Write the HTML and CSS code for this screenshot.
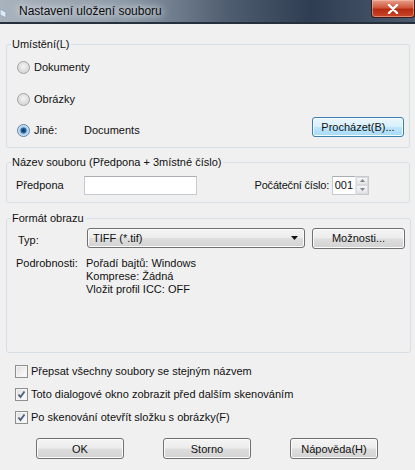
FILE: index.html
```html
<!DOCTYPE html>
<html lang="cs">
<head>
  <meta charset="UTF-8" />
  <title>Nastavení uložení souboru</title>
  <link rel="stylesheet" href="styles.css">
</head>
<body>
  <div class="window">
    <div class="titlebar">
      <svg class="app-icon" width="8" height="12" viewBox="0 0 8 12">
        <path d="M0 2 L6 5 L6 11 L0 8 Z" fill="#dfe8f2" stroke="#8ea4bc" stroke-width="1"/>
      </svg>
      <span class="title">Nastavení uložení souboru</span>
      <button class="close">
        <svg width="12" height="10" viewBox="0 0 12 10">
          <path d="M2 1 L10 9 M10 1 L2 9" stroke="#fff" stroke-width="2.4" stroke-linecap="round"/>
        </svg>
      </button>
    </div>

    <div class="client">
      <fieldset class="group group-location">
        <legend>Umístění(L)</legend>
        <div class="row row-docs">
          <span class="radio"></span><span>Dokumenty</span>
        </div>
        <div class="row row-pics">
          <span class="radio"></span><span>Obrázky</span>
        </div>
        <div class="row row-other">
          <div class="radio-label">
            <span class="radio checked"></span><span>Jiné:</span>
          </div>
          <span class="path">Documents</span>
          <button class="btn btn-hot btn-browse">Procházet(B)...</button>
        </div>
      </fieldset>

      <fieldset class="group group-name">
        <legend>Název souboru (Předpona + 3místné číslo)</legend>
        <div class="row row-name">
          <span class="field-label">Předpona</span>
          <span class="input input-prefix"></span>
          <span class="field-label start-label">Počáteční číslo:</span>
          <span class="input input-number">001</span>
          <span class="spinner">
            <span class="spin-up">
              <svg width="5" height="3" viewBox="0 0 5 3"><path d="M0 3 L2.5 0 L5 3 Z" fill="#7a8591"/></svg>
            </span>
            <span class="spin-down">
              <svg width="5" height="3" viewBox="0 0 5 3"><path d="M0 0 L2.5 3 L5 0 Z" fill="#7a8591"/></svg>
            </span>
          </span>
        </div>
      </fieldset>

      <fieldset class="group group-format">
        <legend>Formát obrazu</legend>
        <div class="row row-type">
          <span class="field-label type-label">Typ:</span>
          <div class="combo">
            <span>TIFF (*.tif)</span>
            <svg width="7" height="4" viewBox="0 0 7 4"><path d="M0 0 L7 0 L3.5 4 Z" fill="#111"/></svg>
          </div>
          <button class="btn btn-options">Možnosti...</button>
        </div>
        <div class="details">
          <span class="field-label">Podrobnosti:</span>
          <div class="detail-lines">
            <span>Pořadí bajtů: Windows</span>
            <span>Komprese: Žádná</span>
            <span>Vložit profil ICC: OFF</span>
          </div>
        </div>
      </fieldset>

      <div class="checks">
        <div class="check-row">
          <span class="check"></span><span>Přepsat všechny soubory se stejným názvem</span>
        </div>
        <div class="check-row">
          <span class="check checked">
            <svg width="9" height="9" viewBox="0 0 9 9"><path d="M1.5 4.5 L3.5 7 L7.5 1.5" fill="none" stroke="#4a5f78" stroke-width="1.8"/></svg>
          </span><span>Toto dialogové okno zobrazit před dalším skenováním</span>
        </div>
        <div class="check-row">
          <span class="check checked">
            <svg width="9" height="9" viewBox="0 0 9 9"><path d="M1.5 4.5 L3.5 7 L7.5 1.5" fill="none" stroke="#4a5f78" stroke-width="1.8"/></svg>
          </span><span>Po skenování otevřít složku s obrázky(F)</span>
        </div>
      </div>

      <div class="actions">
        <button class="btn btn-action">OK</button>
        <button class="btn btn-action">Storno</button>
        <button class="btn btn-action">Nápověda(H)</button>
      </div>
    </div>
  </div>
</body>
</html>
```

FILE: styles.css
```css
* {
  box-sizing: border-box;
}

body {
  margin: 0;
  padding: 0;
  background-color: #f0f0f0;
  font-family: "Liberation Sans", Arial, sans-serif;
  font-size: 11px;
  color: #111;
}

.window {
  width: 415px;
  height: 470px;
  background-color: #f0f0f0;
  display: flex;
  flex-direction: column;
}

/* title bar */
.titlebar {
  height: 24px;
  display: flex;
  align-items: flex-start;
  background: linear-gradient(90deg, #a9b3bd 0%, #8d99a6 30%, #4f5d70 55%, #2f3d52 75%, #4c5a6e 100%);
  border-bottom: 2px solid #26303c;
}

.app-icon {
  margin-top: 7px;
  flex-shrink: 0;
}

.title {
  margin-left: 11px;
  margin-top: 4px;
  font-size: 12px;
  color: #0c0c0c;
  text-shadow: 0 0 6px #e8ecf0, 0 0 10px #dde3ea;
}

.close {
  margin-left: auto;
  width: 44px;
  height: 18px;
  padding: 0;
  border: 1px solid #3a1a1a;
  border-top: none;
  border-radius: 0 0 4px 4px;
  background: linear-gradient(180deg, #e6a08c 0%, #d0563c 45%, #b52b12 55%, #c9472a 100%);
  box-shadow: inset 0 0 0 1px rgba(255, 200, 180, 0.5);
  display: flex;
  align-items: center;
  justify-content: center;
}

/* client area */
.client {
  flex: 1;
  padding: 13px 5px 0 6px;
  display: flex;
  flex-direction: column;
}

.group {
  margin: 0;
  padding: 0 5px 0 10px;
  border: 1px solid #d5dfe5;
  border-radius: 3px;
}

.group legend {
  margin-left: -6px;
  padding: 0 2px 0 1px;
  line-height: 14px;
  font-size: 11px;
}

.row {
  display: flex;
  align-items: center;
  height: 20px;
  white-space: nowrap;
}

.radio {
  width: 13px;
  height: 13px;
  border-radius: 50%;
  border: 1px solid #a2a2a2;
  background: radial-gradient(circle at 50% 40%, #f4f4f4 0%, #dcdcdc 60%, #cfcfcf 100%);
  margin-right: 4px;
  flex-shrink: 0;
}

.radio.checked {
  border-color: #5b7fa3;
  background: radial-gradient(circle, #0e2f56 0%, #2d6ba6 35%, #8fc0e8 42%, #dbe9f5 70%, #eef4fa 100%);
}

.row-docs {
  margin-top: 6px;
}

.row-pics {
  margin-top: 12px;
}

.row-other {
  margin-top: 11px;
  margin-bottom: 7px;
}

.radio-label {
  width: 67px;
  display: flex;
  align-items: center;
}

.path {
  flex: 1;
}

/* buttons */
.btn {
  font-family: "Liberation Sans", Arial, sans-serif;
  font-size: 11px;
  color: #111;
  height: 21px;
  padding: 0;
  border: 1px solid #707070;
  border-radius: 3px;
  background: linear-gradient(180deg, #f4f4f4 0%, #ececec 48%, #dedede 52%, #d2d2d2 100%);
  box-shadow: inset 0 0 0 1px #fbfbfb;
}

.btn-hot {
  border-color: #3c7fb1;
  background: linear-gradient(180deg, #eaf6fd 0%, #d9f0fc 48%, #bee6fd 52%, #a7d9f5 100%);
  box-shadow: inset 0 0 0 1px #f5fbfe;
}

.btn-browse {
  width: 92px;
  height: 20px;
  align-self: flex-start;
  margin-top: -3px;
}

/* file name group */
.group-name {
  margin-top: 7px;
}

.row-name {
  margin-top: 6px;
  margin-bottom: 7px;
}

.field-label {
  width: 67px;
  flex-shrink: 0;
}

.row-name .field-label:first-child {
  margin-left: -1px;
  width: 68px;
}

.input {
  height: 19px;
  background: #fff;
  border: 1px solid #c5cad1;
  border-top-color: #abadb3;
}

.input-prefix {
  width: 113px;
  margin-right: 56px;
}

.start-label {
  width: 79px;
  text-align: right;
  padding-right: 3px;
  letter-spacing: -0.2px;
}

.input-number {
  width: 23px;
  display: flex;
  align-items: center;
  justify-content: flex-end;
  padding-right: 2px;
  border-right: none;
}

.spinner {
  width: 14px;
  height: 19px;
  display: flex;
  flex-direction: column;
  border: 1px solid #c5cad1;
  border-left-color: #e3e6ea;
  background: #fff;
}

.spin-up,
.spin-down {
  flex: 1;
  display: flex;
  align-items: center;
  justify-content: center;
  background: linear-gradient(180deg, #f6f6f6, #e4e4e4);
  border: 1px solid #d8dadd;
}

/* format group */
.group-format {
  margin-top: 8px;
  padding-bottom: 56px;
}

.row-type {
  margin-top: 3px;
  height: 20px;
}

.type-label {
  width: 70px;
  padding-left: 1px;
  padding-top: 3px;
}

.combo {
  width: 218px;
  height: 20px;
  display: flex;
  align-items: center;
  justify-content: space-between;
  padding: 0 6px 0 5px;
  border: 1px solid #707070;
  border-radius: 3px;
  background: linear-gradient(180deg, #f4f4f4 0%, #ececec 48%, #dedede 52%, #d2d2d2 100%);
  box-shadow: inset 0 0 0 1px #fbfbfb;
}

.btn-options {
  width: 93px;
  margin-left: 7px;
}

.details {
  display: flex;
  margin-top: 9px;
  line-height: 13px;
}

.details .field-label {
  width: 70px;
  margin-left: -1px;
}

.detail-lines {
  display: flex;
  flex-direction: column;
}

/* checkboxes */
.checks {
  display: flex;
  flex-direction: column;
  gap: 7px;
  margin-top: 10px;
  padding-left: 9px;
}

.check-row {
  height: 16px;
  display: flex;
  align-items: center;
}

.check {
  width: 13px;
  height: 13px;
  border: 1px solid #8e8f8f;
  background: linear-gradient(135deg, #dcdcdc 0%, #f2f2f2 60%, #fbfbfb 100%);
  box-shadow: inset 0 0 0 1px #f4f4f4;
  margin-right: 3px;
  display: flex;
  align-items: center;
  justify-content: center;
  flex-shrink: 0;
}

/* bottom buttons */
.actions {
  display: flex;
  gap: 39px;
  margin-top: 13px;
  padding-left: 30px;
}

.btn-action {
  width: 88px;
}
```
